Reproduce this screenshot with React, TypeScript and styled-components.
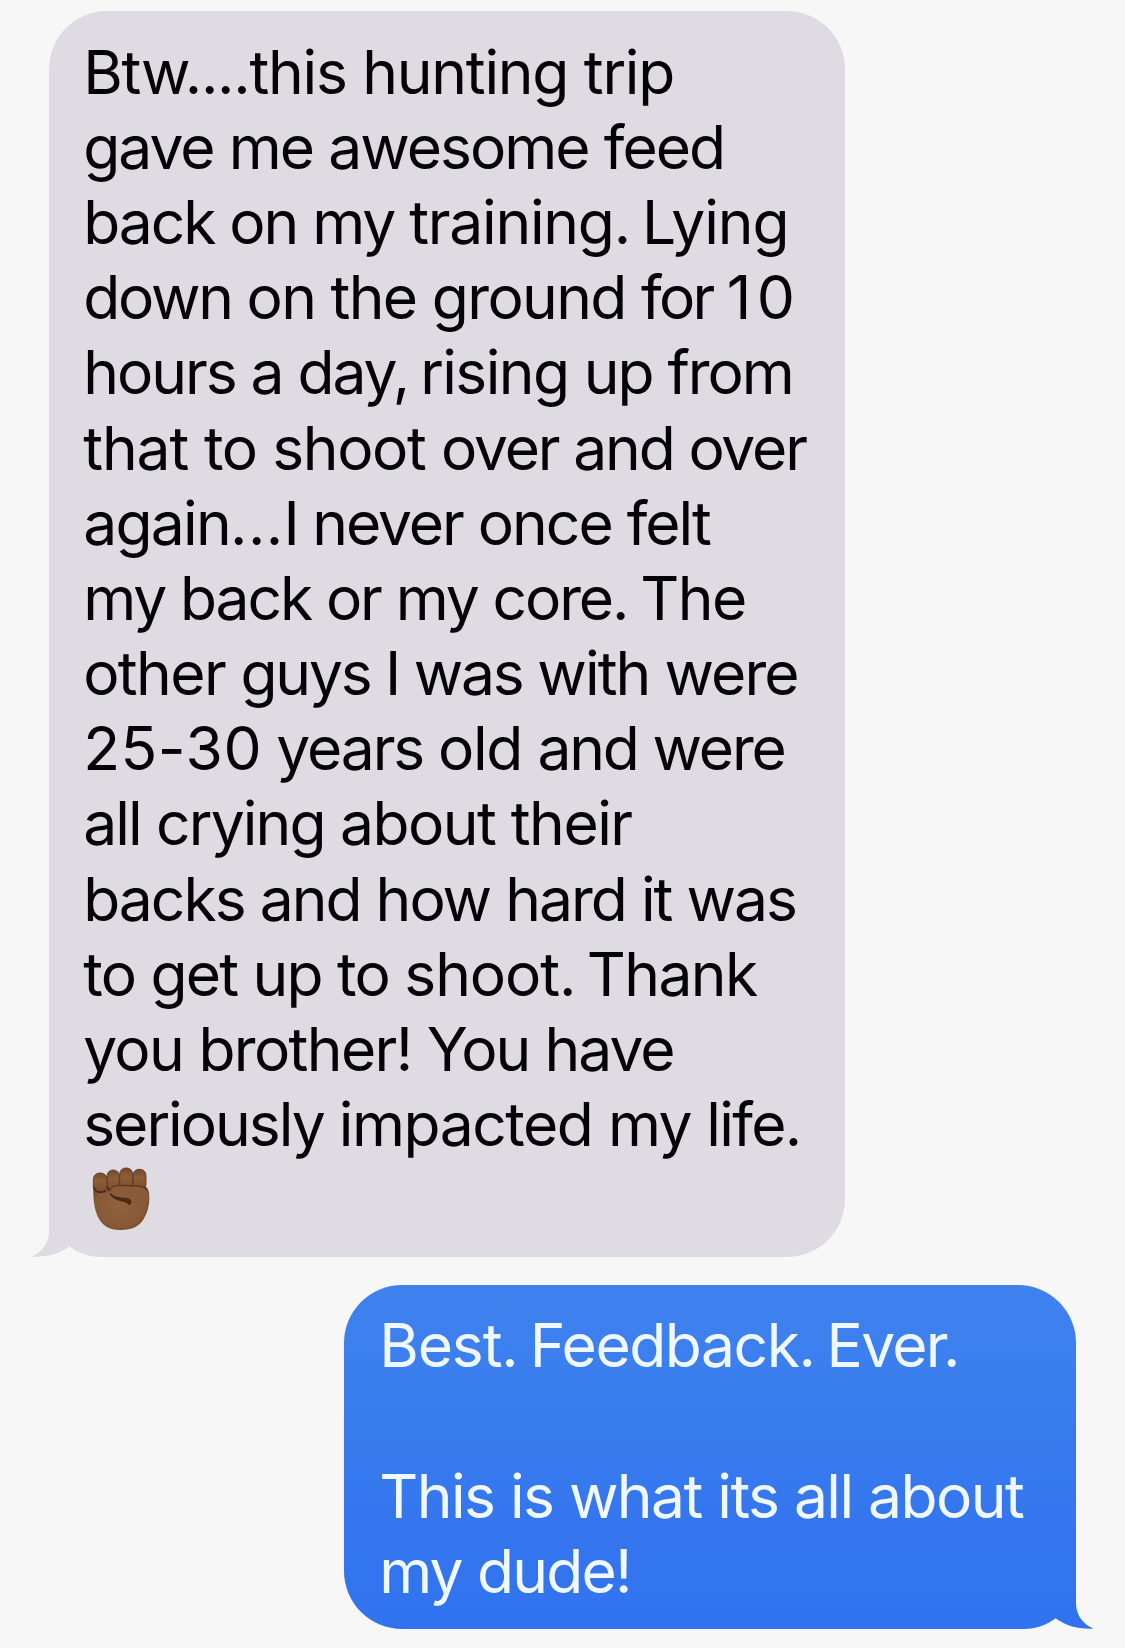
import React from "react";
import styled, { createGlobalStyle } from "styled-components";

const PageStyle = createGlobalStyle`
  body {
    margin: 0;
    background: #f7f7f7;
  }
`;

const Thread = styled.main`
  box-sizing: border-box;
  display: flex;
  flex-direction: column;
  gap: 27.4px;
  width: 1125px;
  height: 1648px;
  padding: 11.2px 49px 0 49.2px;
  overflow: hidden;
  font-family: Inter, "Liberation Sans", sans-serif;
  font-size: 60.5px;
  font-weight: 400;
  line-height: 75.2px;
`;

const Bubble = styled.section<{ $sent?: boolean }>`
  position: relative;
  box-sizing: border-box;
  flex: none;
  align-self: ${(p) => (p.$sent ? "flex-end" : "flex-start")};
  width: ${(p) => (p.$sent ? 732 : 795.8)}px;
  height: ${(p) => (p.$sent ? 344.4 : 1246.3)}px;
  padding: 23.4px 0 0 ${(p) => (p.$sent ? 35.2 : 34)}px;
  border-radius: ${(p) => (p.$sent ? "58px 58px 52px 58px" : "58px 58px 58px 52px")};
  background: ${(p) =>
    p.$sent ? "linear-gradient(#3f82ee, #3a7ded 32%, #3576ee 68%, #3173ef)" : "#dedbe3"};
  color: ${(p) => (p.$sent ? "#f0f8ff" : "#030305")};
`;

const Line = styled.div`
  height: 75.2px;
  white-space: pre;
`;

const Run = styled.span<{ $tracking: number }>`
  letter-spacing: ${(p) => p.$tracking}px;
`;

const TailShape = styled.svg<{ $sent?: boolean }>`
  position: absolute;
  bottom: 0;
  ${(p) => (p.$sent ? "right: -18px; transform: scaleX(-1);" : "left: -18px;")}
  width: 60px;
  height: 60px;
  overflow: visible;
`;

const FistShape = styled.svg`
  display: block;
  width: 75px;
  height: 75px;
  margin: -1.5px 0 0 1px;
`;

function Tail({ sent }: { sent?: boolean }) {
  return (
    <TailShape $sent={sent} viewBox="0 0 60 60">
      <defs>
        <linearGradient id="tail-blue" gradientUnits="userSpaceOnUse" x1="0" y1="-50" x2="0" y2="60">
          <stop offset="0" stopColor="#3576ee" />
          <stop offset="1" stopColor="#3173ef" />
        </linearGradient>
      </defs>
      <path
        d="M18 0 V35 C17.8 46 11 55 0.5 59.7 C15 60.5 28 57 38.5 49.3 L46 40 L40 0 Z"
        fill={sent ? "url(#tail-blue)" : "#dedbe3"}
      />
    </TailShape>
  );
}

function Fist() {
  return (
    <FistShape viewBox="0 0 225 225" role="img" aria-label="Raised fist">
      <defs>
        <radialGradient id="palm" cx="0.48" cy="0.5" r="0.62">
          <stop offset="0" stopColor="#90633c" />
          <stop offset="0.7" stopColor="#875936" />
          <stop offset="1" stopColor="#653b24" />
        </radialGradient>
        <linearGradient id="finger" x1="0" y1="0" x2="0" y2="1">
          <stop offset="0" stopColor="#74482c" />
          <stop offset="0.4" stopColor="#8c5e39" />
          <stop offset="1" stopColor="#7a4d2e" />
        </linearGradient>
      </defs>
      <path
        d="M28 72 C27 112 30 143 42 168 C55 194 75 207 110 207 C144 207 166 196 179 174 C190 155 196 135 196 108 C196 92 192 82 184 76 L150 62 L60 65 Z"
        fill="url(#palm)"
      />
      <g fill="url(#finger)" stroke="#5b341e" strokeWidth="2.5">
        <rect x="147" y="25" width="39" height="62" rx="18" />
        <rect x="107" y="21" width="39" height="66" rx="18" />
        <rect x="69" y="27" width="37" height="62" rx="18" />
        <rect x="28" y="36" width="41" height="57" rx="19" />
      </g>
      <path
        d="M78 91 C76 78 88 73 104 73 L163 75 C186 77 195 89 194 110 C192 128 178 138 160 140 C150 141 143 136 140 127 C133 113 112 112 98 108 C86 105 79 100 78 91 Z"
        fill="#895b38"
      />
      <path
        d="M82 100 C88 107 100 109 110 111 C125 112 141 112 141 122 C141 127 139 130 134 131 C132 121 116 122 103 117 C91 113 82 107 78 98 Z"
        fill="#4b2919"
        stroke="#4b2919"
        strokeWidth="3"
        strokeLinejoin="round"
      />
      <path d="M29 80 C34 93 50 97 64 91 M71 80 L73 88" fill="none" stroke="#4b2919" strokeWidth="5" strokeLinecap="round" />
      <path d="M78 90 C78 76 94 73 110 73 L163 75 C175 76 183 80 189 87" fill="none" stroke="#5f3823" strokeWidth="4" />
    </FistShape>
  );
}

type TextRun = [text: string, tracking: number];

const received: TextRun[][] = [
  [["Btw....this hunting trip", -1.256]],
  [["gave me awesome feed", -1.95]],
  [["back on my ", -2.05], ["training.", -1.25], [" ", -4.8], ["Lying", -1]],
  [["down ", -2.24], ["on the ground ", -1.65], ["for", -2.7], [" ", -3], ["1", 5.6], ["0", 0]],
  [["hours a day,", -2.04], [" ", -5], ["rising ", -1.6], ["up from", -2.05]],
  [["that ", -1.1], ["to shoot ", -1.4], ["over and over", -2.15]],
  [["again", -1.71], ["...", 0.4], ["I ", -2.3], ["never once felt", -2.02]],
  [["my back or my core.", -2.1], [" ", -4], ["The", -1.6]],
  [["other ", -1.6], ["guys I was ", -2.25], ["with were", -1.9]],
  [["25-30", 0.5], [" ", -2.8], ["years ", -2.1], ["old ", -1.41], ["and were", -2.15]],
  [["all crying ", -1.85], ["about their", -1.5]],
  [["backs and how hard it was", -1.97]],
  [["to get up to ", -1.76], ["shoot.", -1.1], [" ", -5.4], ["Thank", -1.6]],
  [["you brother! ", -1.65], ["You have", -1.95]],
  [["seriously ", -2], ["impacted ", -1.45], ["my life.", -1.65]],
];

const sent: TextRun[][] = [
  [["Best.", -1.1], [" ", -5], ["Feedback.", -1.45], [" ", -4.8], ["Ever.", -1.76]],
  [],
  [["This is what its all about", -1.54]],
  [["my dude!", -1.795]],
];

function Message({ lines }: { lines: TextRun[][] }) {
  return (
    <>
      {lines.map((runs, i) => (
        <Line key={i}>
          {runs.map(([text, tracking], j) => (
            <Run key={j} $tracking={tracking}>
              {text}
            </Run>
          ))}
        </Line>
      ))}
    </>
  );
}

export default function App() {
  return (
    <>
      <PageStyle />
      <Thread>
        <Bubble>
          <Tail />
          <Message lines={received} />
          <Line>
            <Fist />
          </Line>
        </Bubble>
        <Bubble $sent>
          <Tail sent />
          <Message lines={sent} />
        </Bubble>
      </Thread>
    </>
  );
}
